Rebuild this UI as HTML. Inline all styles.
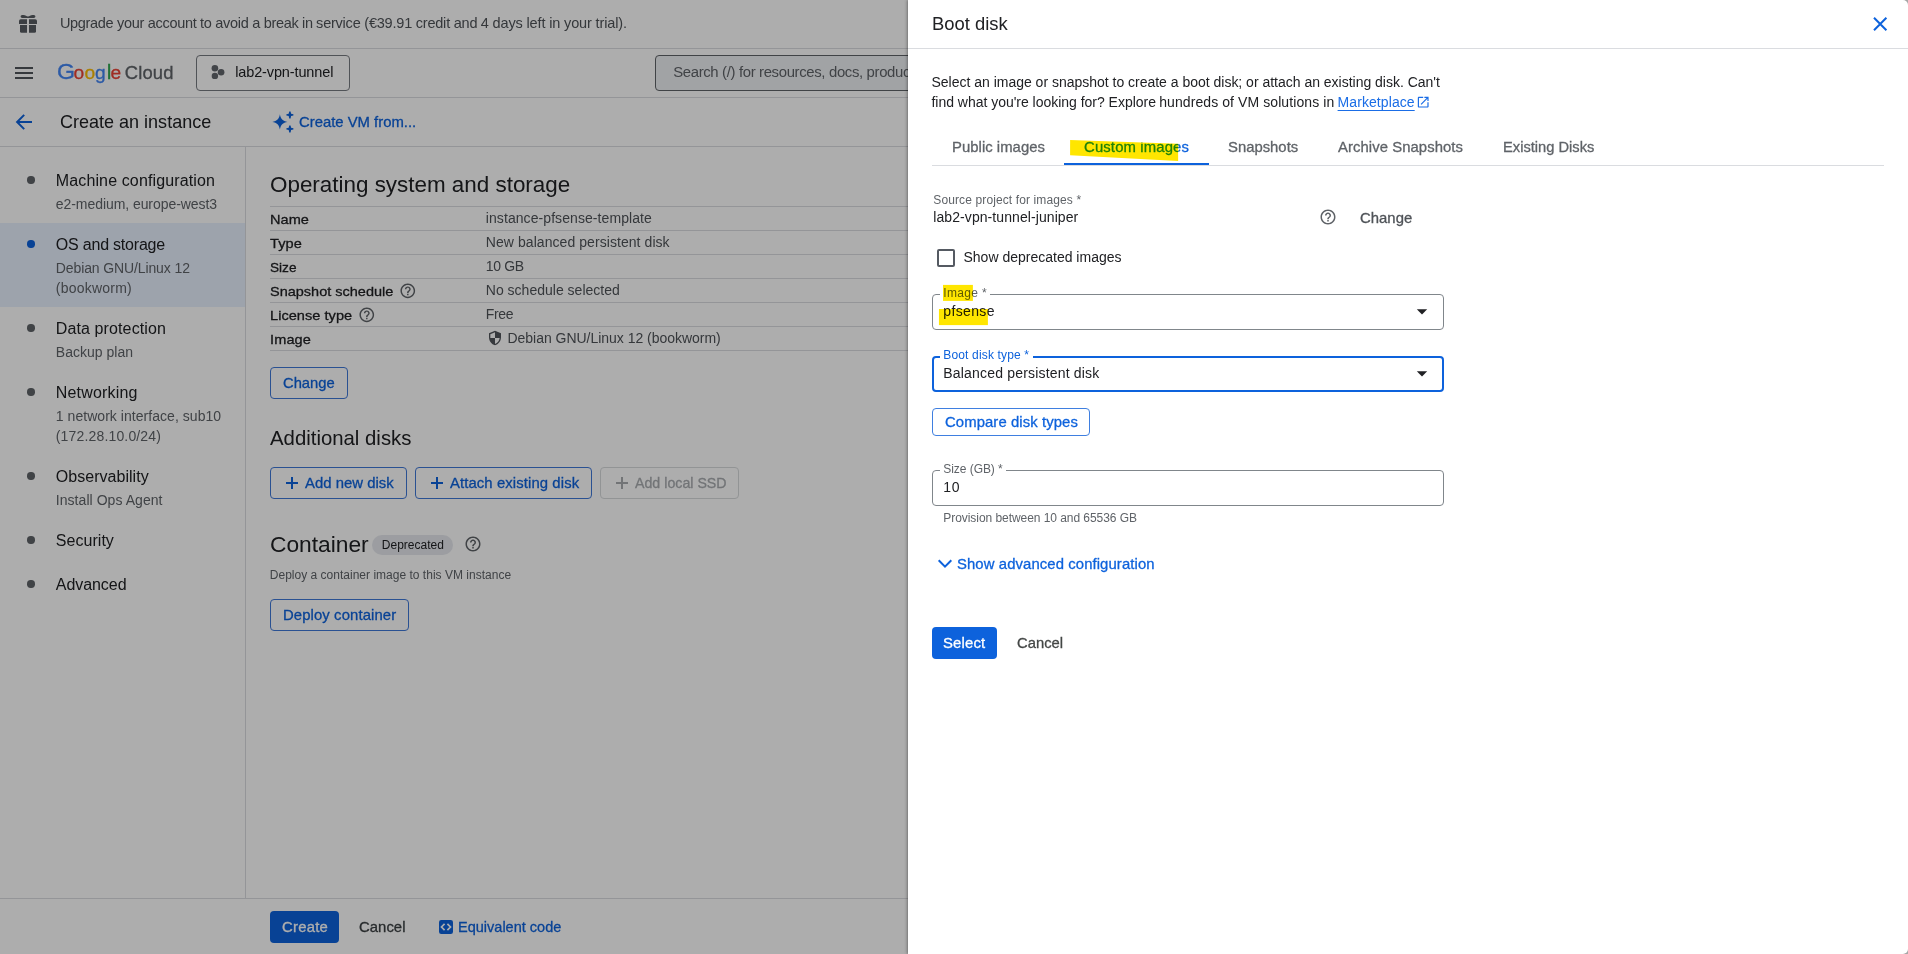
<!DOCTYPE html>
<html lang="en">
<head>
<meta charset="utf-8">
<title>Create an instance – Compute Engine – Google Cloud console</title>
<style>
*{box-sizing:border-box;margin:0;padding:0}
html,body{width:1908px;height:954px;overflow:hidden;background:#fff;font-family:"Liberation Sans",sans-serif}
.t{position:absolute;white-space:nowrap;line-height:20px;font-family:"Liberation Sans",sans-serif}
.a{position:absolute}
#left{position:absolute;left:0;top:0;width:1908px;height:954px;background:#fff;overflow:hidden}
#scrim{position:absolute;left:0;top:0;width:1908px;height:954px;background:rgba(0,0,0,.32)}
#panel{position:absolute;left:908px;top:0;width:1000px;height:954px;background:#fff;box-shadow:-1px 0 3px rgba(0,0,0,.35);border-radius:0 5px 5px 0}
#ptext{position:absolute;left:0;top:0;width:1908px;height:954px}
.hl{position:absolute;left:0;top:0;width:1908px;height:954px;mix-blend-mode:multiply;pointer-events:none}
.hline{position:absolute;height:1px;background:#dadce0}
.btn{position:absolute;border:1px solid #3f78d8;border-radius:4px;background:transparent}
.dot{position:absolute;width:7.4px;height:7.4px;margin:.3px;border-radius:50%;background:#5f6368}
.fld{position:absolute;border:1px solid #80868b;border-radius:4px;background:#fff}
.gap{position:absolute;background:#fff;height:4px}
</style>
</head>
<body>
<div id="left">
  <!-- bars -->
  <div class="hline" style="left:0;top:48px;width:1908px"></div>
  <div class="hline" style="left:0;top:97px;width:1908px"></div>
  <div class="hline" style="left:0;top:146px;width:1908px"></div>
  <div class="hline" style="left:0;top:898px;width:1908px"></div>
  <div class="a" style="left:245px;top:147px;width:1px;height:751px;background:#dadce0"></div>
  <!-- selected nav -->
  <div class="a" style="left:0;top:223px;width:245px;height:84px;background:#e8f0fe"></div>
  <svg class="a" style="left:0;top:0" width="60" height="48" viewBox="0 0 60 48">
<g fill="#585c62">
<path d="M19,21 a1.8,1.8 0 0 1 1.8,-1.8 H27 V24 H19 Z"/><path d="M29,19.2 H35.2 a1.8,1.8 0 0 1 1.8,1.8 V24 H29 Z"/>
<path d="M20,25.1 H27 V32.8 H21.5 a1.5,1.5 0 0 1 -1.5,-1.5 Z"/><path d="M29,25.1 H36 V31.3 a1.5,1.5 0 0 1 -1.5,1.5 H29 Z"/>
<path d="M20.6,16.4 C20.6,15.3 21.8,14.9 23.4,14.9 C25.6,14.9 26.6,16.2 28,16.6 C29.4,16.2 30.4,14.9 32.6,14.9 C34.2,14.9 35.4,15.3 35.4,16.4 C35.4,17.5 34.2,17.9 32.6,17.9 H23.4 C21.8,17.9 20.6,17.5 20.6,16.4 Z"/>
</g></svg>
  <div class="a" style="left:15px;top:67px;width:18px;height:2px;background:#50545a"></div>
  <div class="a" style="left:15px;top:72px;width:18px;height:2px;background:#50545a"></div>
  <div class="a" style="left:15px;top:77px;width:18px;height:2px;background:#50545a"></div>
  <svg class="a" style="left:208px;top:62px" width="20" height="20" viewBox="208 62 20 20"><g fill="#62666c"><circle cx="214.9" cy="68.2" r="3.3"/><circle cx="221.1" cy="72.2" r="3.3"/><circle cx="214.9" cy="75.9" r="3.2"/></g></svg>
  <svg class="a" style="left:12px;top:110px" width="24" height="24" viewBox="12 110 24 24"><path d="M32,122 H17.6 M24.2,114.9 L17.1,122 L24.2,129.1" fill="none" stroke="#0d62dc" stroke-width="2" stroke-linecap="butt" stroke-linejoin="miter"/></svg>
  <svg class="a" style="left:270px;top:108px" width="28" height="28" viewBox="270 108 28 28"><path d="M279.90,114.30 C280.66,119.01 282.79,121.14 287.50,121.90 C282.79,122.66 280.66,124.79 279.90,129.50 C279.14,124.79 277.01,122.66 272.30,121.90 C277.01,121.14 279.14,119.01 279.90,114.30 Z M289.20,111.40 L290.60,111.40 L291.09,113.71 L293.40,114.20 L293.40,115.60 L291.09,116.09 L290.60,118.40 L289.20,118.40 L288.71,116.09 L286.40,115.60 L286.40,114.20 L288.71,113.71Z M289.20,125.40 L290.60,125.40 L291.09,127.71 L293.40,128.20 L293.40,129.60 L291.09,130.09 L290.60,132.40 L289.20,132.40 L288.71,130.09 L286.40,129.60 L286.40,128.20 L288.71,127.71Z" fill="#0d62dc"/></svg>
  <svg class="a" style="left:399.20px;top:282.10px" width="17.6" height="17.6" viewBox="0 0 24 24"><path d="M11 18h2v-2h-2v2zm1-16C6.48 2 2 6.48 2 12s4.48 10 10 10 10-4.48 10-10S17.52 2 12 2zm0 18c-4.41 0-8-3.59-8-8s3.59-8 8-8 8 3.59 8 8-3.59 8-8 8zm0-14c-2.21 0-4 1.79-4 4h2c0-1.1.9-2 2-2s2 .9 2 2c0 2-3 1.75-3 5h2c0-2.25 3-2.5 3-5 0-2.21-1.79-4-4-4z" fill="#5f6368"/></svg>
  <svg class="a" style="left:358.20px;top:306.10px" width="17.6" height="17.6" viewBox="0 0 24 24"><path d="M11 18h2v-2h-2v2zm1-16C6.48 2 2 6.48 2 12s4.48 10 10 10 10-4.48 10-10S17.52 2 12 2zm0 18c-4.41 0-8-3.59-8-8s3.59-8 8-8 8 3.59 8 8-3.59 8-8 8zm0-14c-2.21 0-4 1.79-4 4h2c0-1.1.9-2 2-2s2 .9 2 2c0 2-3 1.75-3 5h2c0-2.25 3-2.5 3-5 0-2.21-1.79-4-4-4z" fill="#5f6368"/></svg>
  <svg class="a" style="left:463.90px;top:534.80px" width="18" height="18" viewBox="0 0 24 24"><path d="M11 18h2v-2h-2v2zm1-16C6.48 2 2 6.48 2 12s4.48 10 10 10 10-4.48 10-10S17.52 2 12 2zm0 18c-4.41 0-8-3.59-8-8s3.59-8 8-8 8 3.59 8 8-3.59 8-8 8zm0-14c-2.21 0-4 1.79-4 4h2c0-1.1.9-2 2-2s2 .9 2 2c0 2-3 1.75-3 5h2c0-2.25 3-2.5 3-5 0-2.21-1.79-4-4-4z" fill="#5f6368"/></svg>
  <svg class="a" style="left:487.00px;top:330.00px" width="16" height="16" viewBox="0 0 24 24"><path d="M12 1L3 5v6c0 5.55 3.84 10.74 9 12 5.16-1.26 9-6.45 9-12V5l-9-4zm0 10.99h7c-.53 4.12-3.28 7.79-7 8.94V12H5V6.3l7-3.11v8.8z" fill="#50545a"/></svg>
  <div class="a" style="left:286px;top:482px;width:12px;height:2px;background:#0d62dc"></div><div class="a" style="left:291px;top:477px;width:2px;height:12px;background:#0d62dc"></div>
  <div class="a" style="left:430.8px;top:482px;width:12px;height:2px;background:#0d62dc"></div><div class="a" style="left:435.8px;top:477px;width:2px;height:12px;background:#0d62dc"></div>
  <div class="a" style="left:615.8px;top:482px;width:12px;height:2px;background:#a8abaf"></div><div class="a" style="left:620.8px;top:477px;width:2px;height:12px;background:#a8abaf"></div>
  <svg class="a" style="left:439px;top:920px" width="14" height="14" viewBox="0 0 14 14"><rect x="0" y="0" width="14" height="14" rx="2.2" fill="#0d62dc"/><path d="M5.6,3.9 L2.5,7 L5.6,10.1 M8.4,3.9 L11.5,7 L8.4,10.1" fill="none" stroke="#fff" stroke-width="1.7"/></svg>
  <!-- nav dots -->
  <div class="dot" style="left:27px;top:176px"></div>
  <div class="dot" style="left:27px;top:240px;background:#0d62dc"></div>
  <div class="dot" style="left:27px;top:324px"></div>
  <div class="dot" style="left:27px;top:388px"></div>
  <div class="dot" style="left:27px;top:472px"></div>
  <div class="dot" style="left:27px;top:536px"></div>
  <div class="dot" style="left:27px;top:580px"></div>
  <!-- project picker + search -->
  <div class="a" style="left:196px;top:55px;width:154px;height:36px;border:1px solid #777b81;border-radius:4px"></div>
  <div class="a" style="left:655px;top:55px;width:720px;height:36px;border:1px solid #5f6368;border-radius:4px;background:#eef0f3"></div>
  <!-- table lines -->
  <div class="hline" style="left:270px;top:206px;width:1614px"></div>
  <div class="hline" style="left:270px;top:230px;width:1614px"></div>
  <div class="hline" style="left:270px;top:254px;width:1614px"></div>
  <div class="hline" style="left:270px;top:278px;width:1614px"></div>
  <div class="hline" style="left:270px;top:302px;width:1614px"></div>
  <div class="hline" style="left:270px;top:326px;width:1614px"></div>
  <div class="hline" style="left:270px;top:350px;width:1614px"></div>
  <!-- buttons -->
  <div class="btn" style="left:270px;top:367px;width:78px;height:32px"></div>
  <div class="btn" style="left:270px;top:467px;width:137px;height:32px"></div>
  <div class="btn" style="left:415px;top:467px;width:177px;height:32px"></div>
  <div class="btn" style="left:600px;top:467px;width:139px;height:32px;border-color:#d8dadc"></div>
  <div class="btn" style="left:270px;top:599px;width:139px;height:32px"></div>
  <div class="a" style="left:372px;top:535px;width:81px;height:20px;border-radius:10px;background:#e6e8ee"></div>
  <div class="a" style="left:270px;top:911px;width:69px;height:32px;border-radius:4px;background:#0d62dc"></div>
<span class="t" style="left:59.90px;top:13px;font-size:14.5px;font-weight:400;color:#4f5358;letter-spacing:-0.308px;">Upgrade your account to avoid a break in</span>
<span class="t" style="left:316.10px;top:13px;font-size:14.5px;font-weight:400;color:#4f5358;letter-spacing:-0.217px;">service (€39.91 credit and</span>
<span class="t" style="left:480.80px;top:13px;font-size:14.5px;font-weight:400;color:#4f5358;letter-spacing:-0.145px;">4 days left in your trial).</span>
<span class="t" style="left:235.20px;top:62px;font-size:14.5px;font-weight:400;color:#202124;letter-spacing:-0.125px;">lab2-vpn-tunnel</span>
<span class="t" style="left:673.20px;top:62px;font-size:14.9px;font-weight:400;color:#5f6368;letter-spacing:-0.343px;">Search (/) for resources, docs, products</span>
<span class="t" style="left:59.80px;top:112px;font-size:18.4px;font-weight:400;color:#202124;letter-spacing:0.000px;transform:scaleX(0.9794);transform-origin:0 0;">Create an instance</span>
<span class="t" style="left:299.30px;top:112px;font-size:13.9px;font-weight:400;color:#0d62dc;-webkit-text-stroke:0.28px #0d62dc;letter-spacing:-0.000px;transform:scaleX(1.0693);transform-origin:0 0;">Create VM from...</span>
<span class="t" style="left:55.80px;top:171px;font-size:16px;font-weight:400;color:#202124;letter-spacing:0.126px;">Machine configuration</span>
<span class="t" style="left:55.80px;top:194px;font-size:14px;font-weight:400;color:#5f6368;letter-spacing:-0.063px;">e2-medium, europe-west3</span>
<span class="t" style="left:55.80px;top:235px;font-size:16px;font-weight:400;color:#202124;letter-spacing:-0.206px;">OS and storage</span>
<span class="t" style="left:55.80px;top:258px;font-size:14px;font-weight:400;color:#5f6368;letter-spacing:-0.115px;">Debian GNU/Linux 12</span>
<span class="t" style="left:55.80px;top:278px;font-size:14px;font-weight:400;color:#5f6368;letter-spacing:0.229px;">(bookworm)</span>
<span class="t" style="left:55.80px;top:319px;font-size:16px;font-weight:400;color:#202124;letter-spacing:0.112px;">Data protection</span>
<span class="t" style="left:55.80px;top:342px;font-size:14px;font-weight:400;color:#5f6368;letter-spacing:0.013px;">Backup plan</span>
<span class="t" style="left:55.80px;top:383px;font-size:16px;font-weight:400;color:#202124;letter-spacing:0.187px;">Networking</span>
<span class="t" style="left:55.80px;top:406px;font-size:14px;font-weight:400;color:#5f6368;letter-spacing:0.045px;">1 network interface, sub10</span>
<span class="t" style="left:55.80px;top:426px;font-size:14px;font-weight:400;color:#5f6368;letter-spacing:0.159px;">(172.28.10.0/24)</span>
<span class="t" style="left:55.80px;top:467px;font-size:16px;font-weight:400;color:#202124;letter-spacing:0.032px;">Observability</span>
<span class="t" style="left:55.80px;top:490px;font-size:14px;font-weight:400;color:#5f6368;letter-spacing:0.050px;">Install Ops Agent</span>
<span class="t" style="left:55.80px;top:531px;font-size:16px;font-weight:400;color:#202124;letter-spacing:0.038px;">Security</span>
<span class="t" style="left:55.80px;top:575px;font-size:16px;font-weight:400;color:#202124;letter-spacing:-0.059px;">Advanced</span>
<span class="t" style="left:269.80px;top:174px;font-size:22.8px;font-weight:400;color:#202124;letter-spacing:0.000px;transform:scaleX(0.9830);transform-origin:0 0;">Operating system and storage</span>
<span class="t" style="left:269.80px;top:210px;font-size:13.6px;font-weight:400;color:#202124;-webkit-text-stroke:0.28px #202124;letter-spacing:0.022px;transform:scaleX(1.0700);transform-origin:0 0;">Name</span>
<span class="t" style="left:485.80px;top:208px;font-size:14px;font-weight:400;color:#4f5358;letter-spacing:0.076px;">instance-pfsense-template</span>
<span class="t" style="left:269.80px;top:234px;font-size:13.6px;font-weight:400;color:#202124;-webkit-text-stroke:0.28px #202124;letter-spacing:0.082px;transform:scaleX(1.0700);transform-origin:0 0;">Type</span>
<span class="t" style="left:485.80px;top:232px;font-size:14px;font-weight:400;color:#4f5358;letter-spacing:0.064px;">New balanced persistent disk</span>
<span class="t" style="left:269.80px;top:258px;font-size:13.6px;font-weight:400;color:#202124;-webkit-text-stroke:0.28px #202124;letter-spacing:0.000px;transform:scaleX(1.0018);transform-origin:0 0;">Size</span>
<span class="t" style="left:485.80px;top:256px;font-size:14px;font-weight:400;color:#4f5358;letter-spacing:-0.361px;">10 GB</span>
<span class="t" style="left:269.80px;top:282px;font-size:13.6px;font-weight:400;color:#202124;-webkit-text-stroke:0.28px #202124;letter-spacing:0.000px;transform:scaleX(1.0662);transform-origin:0 0;">Snapshot schedule</span>
<span class="t" style="left:485.80px;top:280px;font-size:14px;font-weight:400;color:#4f5358;letter-spacing:0.006px;">No schedule selected</span>
<span class="t" style="left:269.80px;top:306px;font-size:13.6px;font-weight:400;color:#202124;-webkit-text-stroke:0.28px #202124;letter-spacing:0.041px;transform:scaleX(1.0700);transform-origin:0 0;">License type</span>
<span class="t" style="left:485.80px;top:304px;font-size:14px;font-weight:400;color:#4f5358;letter-spacing:-0.374px;">Free</span>
<span class="t" style="left:269.80px;top:330px;font-size:13.6px;font-weight:400;color:#202124;-webkit-text-stroke:0.28px #202124;letter-spacing:0.107px;transform:scaleX(1.0700);transform-origin:0 0;">Image</span>
<span class="t" style="left:507.50px;top:328px;font-size:14px;font-weight:400;color:#4f5358;letter-spacing:-0.026px;">Debian GNU/Linux 12 (bookworm)</span>
<span class="t" style="left:283.00px;top:373px;font-size:13.9px;font-weight:400;color:#0d62dc;-webkit-text-stroke:0.28px #0d62dc;letter-spacing:-0.000px;transform:scaleX(1.0622);transform-origin:0 0;">Change</span>
<span class="t" style="left:269.80px;top:428px;font-size:20.6px;font-weight:400;color:#202124;letter-spacing:0.000px;transform:scaleX(0.9882);transform-origin:0 0;">Additional disks</span>
<span class="t" style="left:305.10px;top:473px;font-size:13.9px;font-weight:400;color:#0d62dc;-webkit-text-stroke:0.28px #0d62dc;letter-spacing:0.023px;transform:scaleX(1.0700);transform-origin:0 0;">Add new disk</span>
<span class="t" style="left:450.00px;top:473px;font-size:13.9px;font-weight:400;color:#0d62dc;-webkit-text-stroke:0.28px #0d62dc;letter-spacing:0.092px;transform:scaleX(1.0700);transform-origin:0 0;">Attach existing disk</span>
<span class="t" style="left:635.10px;top:473px;font-size:13.9px;font-weight:400;color:#a8abaf;-webkit-text-stroke:0.28px #a8abaf;letter-spacing:0.000px;transform:scaleX(1.0226);transform-origin:0 0;">Add local SSD</span>
<span class="t" style="left:269.80px;top:535px;font-size:22px;font-weight:400;color:#202124;letter-spacing:0.000px;transform:scaleX(1.0347);transform-origin:0 0;">Container</span>
<span class="t" style="left:381.80px;top:535px;font-size:12px;font-weight:400;color:#202124;letter-spacing:0.005px;">Deprecated</span>
<span class="t" style="left:269.80px;top:565px;font-size:12px;font-weight:400;color:#5f6368;letter-spacing:0.011px;">Deploy a container image to this VM instance</span>
<span class="t" style="left:283.00px;top:605px;font-size:13.9px;font-weight:400;color:#0d62dc;-webkit-text-stroke:0.28px #0d62dc;letter-spacing:0.097px;transform:scaleX(1.0700);transform-origin:0 0;">Deploy container</span>
<span class="t" style="left:281.70px;top:917px;font-size:13.9px;font-weight:400;color:#ffffff;-webkit-text-stroke:0.28px #ffffff;letter-spacing:0.215px;transform:scaleX(1.0700);transform-origin:0 0;">Create</span>
<span class="t" style="left:358.60px;top:917px;font-size:13.9px;font-weight:400;color:#3c4043;-webkit-text-stroke:0.28px #3c4043;letter-spacing:0.035px;transform:scaleX(1.0700);transform-origin:0 0;">Cancel</span>
<span class="t" style="left:457.80px;top:917px;font-size:13.9px;font-weight:400;color:#0d62dc;-webkit-text-stroke:0.28px #0d62dc;letter-spacing:0.000px;transform:scaleX(1.0449);transform-origin:0 0;">Equivalent code</span>
<span class="t" style="left:56.80px;top:62px;font-size:21.5px;font-weight:400;color:#4285f4;letter-spacing:0.000px;-webkit-text-stroke:0.3px currentColor;transform:scaleX(1.08);transform-origin:0 0;">G</span>
<span class="t" style="left:73.40px;top:63px;font-size:19.2px;font-weight:400;color:#ea4335;letter-spacing:0.000px;-webkit-text-stroke:0.3px currentColor;">o</span>
<span class="t" style="left:84.60px;top:63px;font-size:19.2px;font-weight:400;color:#fbbc05;letter-spacing:0.000px;-webkit-text-stroke:0.3px currentColor;">o</span>
<span class="t" style="left:95.10px;top:63px;font-size:19.2px;font-weight:400;color:#4285f4;letter-spacing:0.000px;-webkit-text-stroke:0.3px currentColor;">g</span>
<span class="t" style="left:106.70px;top:62px;font-size:21px;font-weight:400;color:#34a853;letter-spacing:0.000px;-webkit-text-stroke:0.3px currentColor;">l</span>
<span class="t" style="left:110.50px;top:63px;font-size:19.2px;font-weight:400;color:#ea4335;letter-spacing:0.000px;-webkit-text-stroke:0.3px currentColor;">e</span>
<span class="t" style="left:124.70px;top:63px;font-size:18.4px;font-weight:400;color:#5f6368;letter-spacing:0.187px;-webkit-text-stroke:0.3px #5f6368;">Cloud</span>
</div>
<div id="scrim"></div>
<div id="panel"></div>
<div id="ptext">
  <div class="hline" style="left:908px;top:48px;width:1000px"></div>
  <div class="hline" style="left:932px;top:165px;width:952px"></div>
  <div class="a" style="left:1064px;top:163px;width:145px;height:2px;background:#0d62dc"></div>
  <!-- checkbox -->
  <div class="a" style="left:937px;top:249px;width:18px;height:18px;border:2px solid #555a62;border-radius:2px"></div>
  <!-- fields -->
  <div class="fld" style="left:932px;top:294px;width:512px;height:36px"></div>
  <div class="gap" style="left:940px;top:292px;width:50px"></div>
  <div class="fld" style="left:932px;top:356px;width:512px;height:36px;border:2px solid #0d62dc"></div>
  <div class="gap" style="left:940px;top:354px;width:93px"></div>
  <div class="fld" style="left:932px;top:470px;width:512px;height:36px"></div>
  <div class="gap" style="left:940px;top:468px;width:66px"></div>
  <div class="btn" style="left:932px;top:408px;width:158px;height:28px;border-color:#3f7fe0"></div>
  <div class="a" style="left:932px;top:627px;width:65px;height:32px;border-radius:4px;background:#0d62dc"></div>
  <svg class="a" style="left:1868px;top:12px" width="24" height="24" viewBox="1868 12 24 24"><path d="M1874,17.8 L1886.4,30.2 M1886.4,17.8 L1874,30.2" stroke="#0d62dc" stroke-width="2" fill="none"/></svg>
  <svg class="a" style="left:1415.50px;top:94.70px" width="14.4" height="14.4" viewBox="0 0 24 24"><path d="M19 19H5V5h7V3H5c-1.11 0-2 .9-2 2v14c0 1.1.89 2 2 2h14c1.1 0 2-.9 2-2v-7h-2v7zM14 3v2h3.59l-9.83 9.83 1.41 1.41L19 6.41V10h2V3h-7z" fill="#1a6de6"/></svg>
  <svg class="a" style="left:1319.00px;top:208.20px" width="18" height="18" viewBox="0 0 24 24"><path d="M11 18h2v-2h-2v2zm1-16C6.48 2 2 6.48 2 12s4.48 10 10 10 10-4.48 10-10S17.52 2 12 2zm0 18c-4.41 0-8-3.59-8-8s3.59-8 8-8 8 3.59 8 8-3.59 8-8 8zm0-14c-2.21 0-4 1.79-4 4h2c0-1.1.9-2 2-2s2 .9 2 2c0 2-3 1.75-3 5h2c0-2.25 3-2.5 3-5 0-2.21-1.79-4-4-4z" fill="#5f6368"/></svg>
  <svg class="a" style="left:1416px;top:307.5px" width="12" height="8" viewBox="0 0 12 8"><path d="M0.8,1.2 H11.2 L6,6.6Z" fill="#202124"/></svg>
  <svg class="a" style="left:1416px;top:369.5px" width="12" height="8" viewBox="0 0 12 8"><path d="M0.8,1.2 H11.2 L6,6.6Z" fill="#202124"/></svg>
  <svg class="a" style="left:934px;top:554px" width="22" height="20" viewBox="934 554 22 20"><path d="M938.7,560.2 L945,566.6 L951.3,560.2" stroke="#0d62dc" stroke-width="2" fill="none"/></svg>
<span class="t" style="left:932.30px;top:14px;font-size:18.4px;font-weight:400;color:#202124;letter-spacing:0.000px;transform:scaleX(1.0006);transform-origin:0 0;">Boot disk</span>
<span class="t" style="left:931.50px;top:72px;font-size:14px;font-weight:400;color:#202124;letter-spacing:-0.011px;">Select an image or snapshot to create a boot disk; or attach an existing disk. Can't</span>
<span class="t" style="left:931.50px;top:92px;font-size:14px;font-weight:400;color:#202124;letter-spacing:-0.023px;">find what you're looking for? Explore</span>
<span class="t" style="left:1159.20px;top:92px;font-size:14px;font-weight:400;color:#202124;letter-spacing:0.086px;">hundreds of VM solutions in</span>
<span class="t" style="left:1337.60px;top:92px;font-size:14px;font-weight:400;color:#1a6de6;letter-spacing:0.076px;text-decoration:underline;text-underline-offset:2.5px;">Marketplace</span>
<span class="t" style="left:951.50px;top:137px;font-size:13.9px;font-weight:400;color:#5f6368;-webkit-text-stroke:0.28px #5f6368;letter-spacing:0.033px;transform:scaleX(1.0700);transform-origin:0 0;">Public images</span>
<span class="t" style="left:1083.80px;top:137px;font-size:13.9px;font-weight:400;color:#0d62dc;-webkit-text-stroke:0.28px #0d62dc;letter-spacing:0.133px;transform:scaleX(1.0700);transform-origin:0 0;clip-path:inset(-5px -5px -5px 88.1px);">Custom images</span>
<span class="t" style="left:1228.20px;top:137px;font-size:13.9px;font-weight:400;color:#5f6368;-webkit-text-stroke:0.28px #5f6368;letter-spacing:0.000px;transform:scaleX(1.0692);transform-origin:0 0;">Snapshots</span>
<span class="t" style="left:1338.00px;top:137px;font-size:13.9px;font-weight:400;color:#5f6368;-webkit-text-stroke:0.28px #5f6368;letter-spacing:0.058px;transform:scaleX(1.0700);transform-origin:0 0;">Archive Snapshots</span>
<span class="t" style="left:1502.50px;top:137px;font-size:13.9px;font-weight:400;color:#5f6368;-webkit-text-stroke:0.28px #5f6368;letter-spacing:0.000px;transform:scaleX(1.0572);transform-origin:0 0;">Existing Disks</span>
<span class="t" style="left:933.30px;top:190px;font-size:12px;font-weight:400;color:#5f6368;letter-spacing:0.117px;">Source project for images *</span>
<span class="t" style="left:933.30px;top:207px;font-size:14px;font-weight:400;color:#202124;letter-spacing:0.078px;">lab2-vpn-tunnel-juniper</span>
<span class="t" style="left:1360.00px;top:208px;font-size:13.9px;font-weight:400;color:#4f5358;-webkit-text-stroke:0.28px #4f5358;letter-spacing:0.034px;transform:scaleX(1.0700);transform-origin:0 0;">Change</span>
<span class="t" style="left:963.50px;top:247px;font-size:14px;font-weight:400;color:#202124;letter-spacing:0.000px;">Show deprecated images</span>
<span class="t" style="left:943.30px;top:283px;font-size:12px;font-weight:400;color:#5f6368;letter-spacing:0.334px;">Image *</span>
<span class="t" style="left:943.30px;top:301px;font-size:14px;font-weight:400;color:#202124;letter-spacing:0.365px;">pfsense</span>
<span class="t" style="left:943.30px;top:345px;font-size:12px;font-weight:400;color:#0d62dc;letter-spacing:0.157px;">Boot disk type *</span>
<span class="t" style="left:943.30px;top:363px;font-size:14px;font-weight:400;color:#202124;letter-spacing:0.181px;">Balanced persistent disk</span>
<span class="t" style="left:944.70px;top:412px;font-size:13.9px;font-weight:400;color:#0d62dc;-webkit-text-stroke:0.28px #0d62dc;letter-spacing:0.085px;transform:scaleX(1.0700);transform-origin:0 0;">Compare disk types</span>
<span class="t" style="left:943.30px;top:459px;font-size:12px;font-weight:400;color:#5f6368;letter-spacing:-0.056px;">Size (GB) *</span>
<span class="t" style="left:943.30px;top:477px;font-size:14px;font-weight:400;color:#202124;letter-spacing:0.711px;">10</span>
<span class="t" style="left:943.30px;top:508px;font-size:12px;font-weight:400;color:#5f6368;letter-spacing:-0.054px;">Provision between 10 and 65536 GB</span>
<span class="t" style="left:956.70px;top:554px;font-size:13.9px;font-weight:400;color:#0d62dc;-webkit-text-stroke:0.28px #0d62dc;letter-spacing:0.090px;transform:scaleX(1.0700);transform-origin:0 0;">Show advanced configuration</span>
<span class="t" style="left:943.20px;top:633px;font-size:13.9px;font-weight:400;color:#ffffff;-webkit-text-stroke:0.28px #ffffff;letter-spacing:0.154px;transform:scaleX(1.0700);transform-origin:0 0;">Select</span>
<span class="t" style="left:1016.90px;top:633px;font-size:13.9px;font-weight:400;color:#444746;-webkit-text-stroke:0.28px #444746;letter-spacing:0.000px;transform:scaleX(1.0659);transform-origin:0 0;">Cancel</span>
</div>
<svg class="hl" viewBox="0 0 1908 954" width="1908" height="954">
  <polygon points="1070.1,139.9 1178.1,143.8 1178.1,160.9 1070.1,155.2" fill="#ffe600"/>
  <rect x="943" y="284.9" width="29.9" height="16" fill="#ffe600"/>
  <rect x="938.95" y="309" width="48.95" height="16.1" fill="#ffe600"/>
</svg>
<div id="over" class="a" style="left:0;top:0;width:1908px;height:954px">
<span class="t" style="left:1083.80px;top:137px;font-size:13.9px;font-weight:400;color:#1f8209;-webkit-text-stroke:0.28px #1f8209;letter-spacing:0.133px;transform:scaleX(1.0700);transform-origin:0 0;clip-path:polygon(-12.9px 2.9px,88.1px 6.8px,88.1px 23.9px,-12.9px 18.2px);">Custom images</span>
</div>
</body>
</html>
